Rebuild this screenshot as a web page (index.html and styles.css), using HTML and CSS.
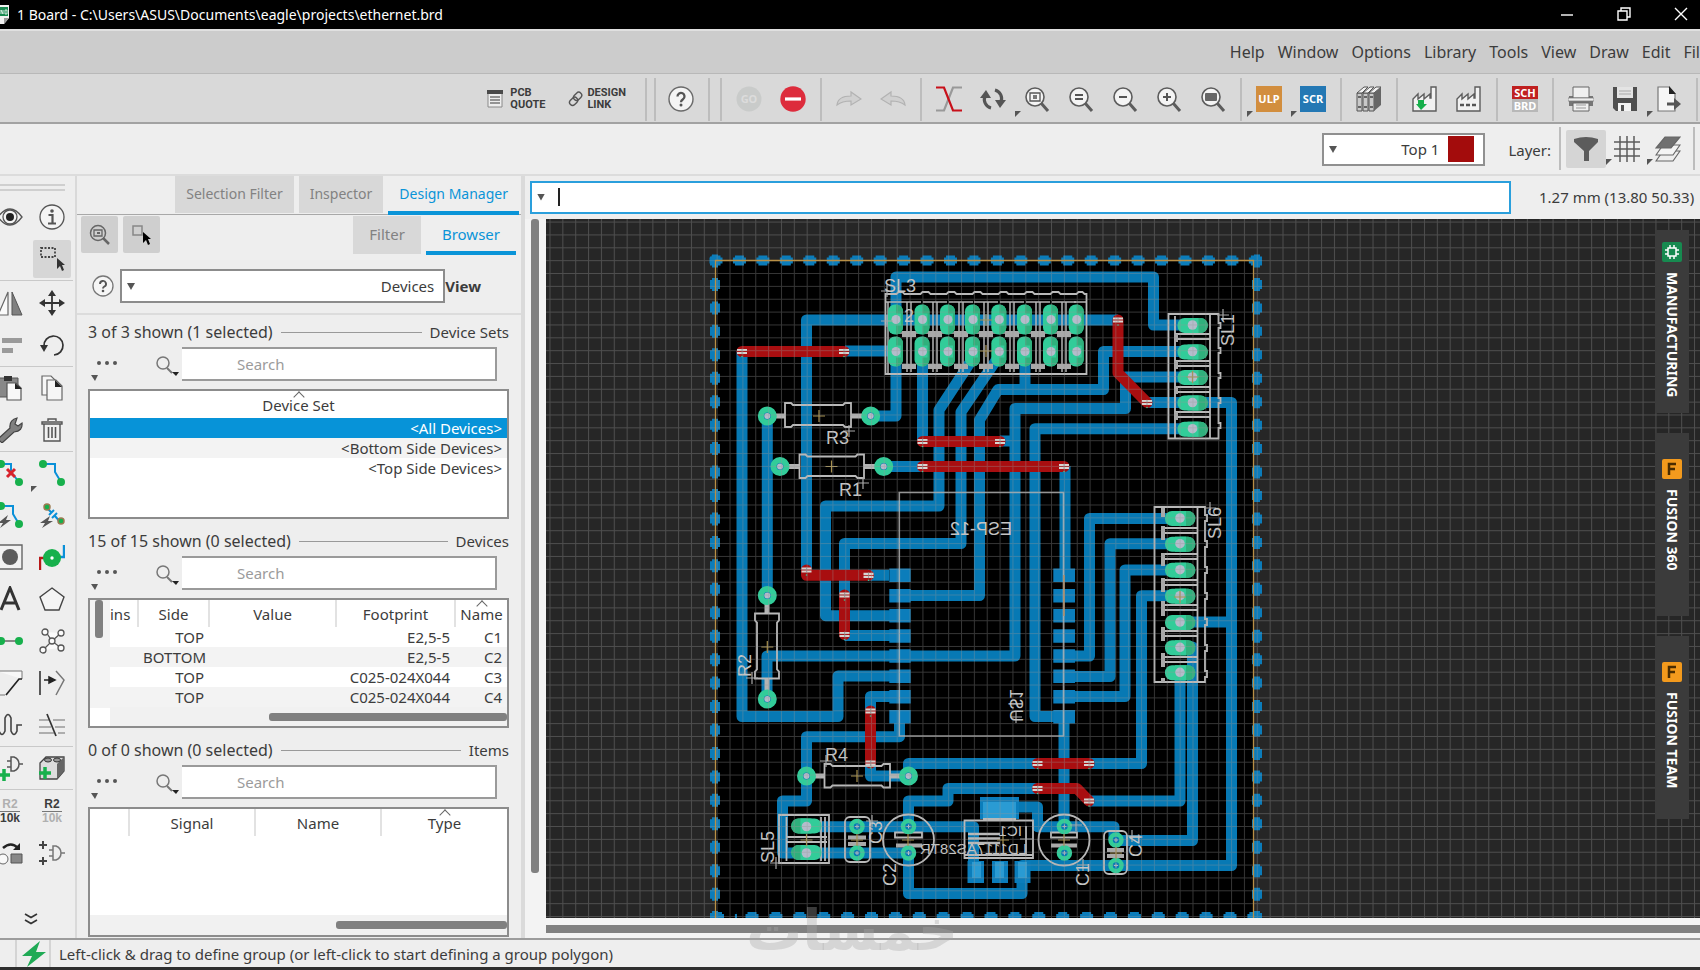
FILE: index.html
```html
<!DOCTYPE html>
<html lang="en">
<head>
<meta charset="utf-8">
<title>1 Board - ethernet.brd</title>
<link rel="stylesheet" href="styles.css">
</head>
<body>
<svg class="defs" width="0" height="0" aria-hidden="true">
  <defs>
    <g id="lens"><path d="M17 17l7 8" stroke="#5c5c5c" stroke-width="3"/><circle cx="11" cy="11" r="9" fill="#f4f4f4" stroke="#5c5c5c" stroke-width="1.6"/></g>
    <g id="factory"><path d="M1 25V13l5-5v5l6-5v5l6-5v4h1V1h5v24z" fill="#f2f2f2" stroke="#5c5c5c" stroke-width="1.4"/></g>
    <g id="more"><circle cx="11" cy="16" r="2"/><circle cx="19" cy="16" r="2"/><circle cx="27" cy="16" r="2"/><path d="M3 28h7l-3 6z"/></g>
    <g id="find"><circle cx="9" cy="15" r="6" fill="none" stroke="#777" stroke-width="1.5"/><path d="M13 20l5 5" stroke="#777" stroke-width="2"/><path d="M18 24h7l-3 4z" fill="#222"/></g>
    <g id="padv"><rect x="-8" y="-15" width="15" height="30" rx="7" fill="#32cc99"/><path d="M0-15a7 7 0 0 1 7 7V8a7 7 0 0 1-7 7z" fill="#2fb07c"/><rect x="-5" y="-6" width="10" height="12" fill="#32cc99"/><circle r="4.5" fill="#b4bccb"/></g>
    <g id="padh"><rect x="-15" y="-7" width="30" height="15" rx="7" fill="#32cc99"/><path d="M0-7h8a7 7 0 0 1 0 15H0z" fill="#2fb07c"/><rect x="-5" y="-7" width="11" height="15" fill="#32cc99"/><circle r="4.8" fill="#b4bccb"/></g>
    <g id="pin"><circle r="6.500" fill="#0779b4" stroke="#32cc99" stroke-width="6"/><circle r="3" fill="#b4bccb"/></g>
    <g id="spin"><circle r="5.500" fill="#0779b4" stroke="#32cc99" stroke-width="4.500"/><path d="M-2 0h4M0-2v4" stroke="#b4bccb"/></g>
    <g id="via"><path d="M-5-1.5H5M-5 1.5H5" stroke="#d9d3d0" stroke-width="2.2"/><path d="M0-3V3" stroke="#888" stroke-width=".7"/><circle cy="5" r=".8" fill="#32cc99"/></g>
    <g id="mark"><path d="M-6 0H6M0-6V6" fill="none" stroke="#a9a9a9" stroke-width="1.2"/></g>
    <g id="origin"><path d="M-6 0H6M0-6V6" fill="none" stroke="#a8914e" stroke-width="1.2"/></g>
    <g id="cell3"><path d="M11 8V78M15 8V78M1 8H25M1 39H8M18 39H25" fill="none" stroke="#b5b5b5" stroke-width="1.500"/><path d="M6 37H20V43H6z" fill="#a9a9a9"/><path d="M6 70H20V75H6z" fill="#a9a9a9"/></g>
  </defs>
</svg>

<div class="app">
  <header class="title">
    <svg class="app-icon" width="9" height="20" viewBox="0 0 9 20"><path d="M0 0H9V13L4 19H0z" fill="#f2f2f2"/><path d="M0 2H8V11H0z" fill="#178a50"/><path d="M1 9V5l2 4V5M5 5h2v4H5z" fill="none" stroke="#fff" stroke-width=".8"/><path d="M9 13L4 19V13z" fill="#999"/></svg>
    <h1>1 Board - C:\Users\ASUS\Documents\eagle\projects\ethernet.brd</h1>
    <div class="win">
      <button aria-label="Minimize"><svg width="14" height="14" viewBox="0 0 14 14"><path d="M1 8H13" stroke="#fff" stroke-width="1.4"/></svg></button>
      <button aria-label="Restore"><svg width="14" height="14" viewBox="0 0 14 14"><path d="M1 4H10V13H1zM4 4V1H13V10H10" fill="none" stroke="#fff" stroke-width="1.4"/></svg></button>
      <button aria-label="Close"><svg width="14" height="14" viewBox="0 0 14 14"><path d="M1 1L13 13M13 1L1 13" stroke="#fff" stroke-width="1.4"/></svg></button>
    </div>
  </header>

  <nav class="menu">
    <button>Help</button><button>Window</button><button>Options</button><button>Library</button><button>Tools</button><button>View</button><button>Draw</button><button>Edit</button><button>File</button>
  </nav>

  <div class="toolbar" role="toolbar" aria-label="Actions">
    <button class="wide">
      <svg width="16" height="18" viewBox="0 0 16 18"><path d="M1 1H15V17H1z" fill="#eee" stroke="#8a8a8a"/><path d="M0 0H16V4H0z" fill="#4a4a4a"/><path d="M3 7H13M3 10H13M3 13H13" stroke="#777" stroke-width="1.4"/></svg>
      <span>PCB<br>QUOTE</span>
    </button>
    <button class="wide">
      <svg width="16" height="16" viewBox="0 0 16 16"><g fill="none" stroke="#555" stroke-width="1.4"><rect x="7" y="1" width="6" height="9" rx="3" transform="rotate(45 10 5)"/><rect x="3" y="6" width="6" height="9" rx="3" transform="rotate(45 6 10)"/></g></svg>
      <span>DESIGN<br>LINK</span>
    </button>
    <i class="sep double"></i>
    <button class="tool" aria-label="Help"><svg width="26" height="26" viewBox="0 0 26 26"><circle cx="13" cy="13" r="12" fill="#f4f4f4" stroke="#6a6a6a" stroke-width="1.4"/><path d="M9.500 10.500a3.500 3.500 0 1 1 5.500 2.800c-1.500 1-2 1.500-2 3" fill="none" stroke="#555" stroke-width="2.300"/><circle cx="13" cy="19" r="1.500" fill="#555"/></svg></button>
    <i class="sep"></i><i class="sep"></i>
    <button class="tool" aria-label="Go"><svg width="26" height="26" viewBox="0 0 26 26"><circle cx="13" cy="13" r="12.500" fill="#c9cbca"/><text x="13" y="17" text-anchor="middle" class="go">GO</text></svg></button>
    <button class="tool" aria-label="Stop"><svg width="26" height="26" viewBox="0 0 26 26"><circle cx="13" cy="13" r="12.700" fill="#dd2c3c"/><path d="M5 13H21" stroke="#fff" stroke-width="3.200"/></svg></button>
    <i class="sep"></i>
    <button class="tool" aria-label="Redo"><svg width="26" height="26" viewBox="0 0 26 26"><path d="M1 19Q2 10 15 10V6L25 13L15 19V15Q6 15 1 19z" fill="#d0d0d0" stroke="#b2b2b2" stroke-width="1.200"/></svg></button>
    <button class="tool" aria-label="Undo"><svg width="26" height="26" viewBox="0 0 26 26"><path d="M25 19Q24 10 11 10V6L1 13L11 19V15Q20 15 25 19z" fill="#d0d0d0" stroke="#b2b2b2" stroke-width="1.200"/></svg></button>
    <i class="sep"></i>
    <button class="tool" aria-label="Ratsnest"><svg width="26" height="26" viewBox="0 0 26 26"><path d="M0 24.500H8L17 1.500H26" fill="none" stroke="#999" stroke-width="2.200"/><path d="M0 1.500H8L17 24.500H26" fill="none" stroke="#c8101a" stroke-width="2.200"/></svg></button>
    <button class="tool" aria-label="Redraw"><svg width="26" height="26" viewBox="0 0 26 26"><path d="M11 22A9 9 0 0 1 5 10M15 4A9 9 0 0 1 21 16" fill="none" stroke="#555" stroke-width="3.200"/><path d="M0 12L6 4L11 12zM15 14H26L20 22z" fill="#555"/></svg></button>
    <button class="tool" aria-label="Zoom window"><i class="drop"></i><svg width="26" height="26" viewBox="0 0 26 26"><use href="#lens"/><path d="M6 7H16V15H6z" fill="none" stroke="#555" stroke-width="1.300"/><path d="M9 9H13V13H9z" fill="#777"/></svg></button>
    <button class="tool" aria-label="Zoom reset"><svg width="26" height="26" viewBox="0 0 26 26"><use href="#lens"/><path d="M7 9H15M7 13H15" stroke="#555" stroke-width="2"/></svg></button>
    <button class="tool" aria-label="Zoom out"><svg width="26" height="26" viewBox="0 0 26 26"><use href="#lens"/><path d="M7 11H15" stroke="#555" stroke-width="2"/></svg></button>
    <button class="tool" aria-label="Zoom in"><svg width="26" height="26" viewBox="0 0 26 26"><use href="#lens"/><path d="M7 11H15M11 7V15" stroke="#555" stroke-width="2"/></svg></button>
    <button class="tool" aria-label="Zoom to fit"><svg width="26" height="26" viewBox="0 0 26 26"><use href="#lens"/><rect x="5" y="7" width="12" height="8" rx="1" fill="#666"/></svg></button>
    <i class="sep"></i>
    <button class="tool" aria-label="Run ULP"><i class="drop"></i><b class="tag ulp">ULP</b></button>
    <button class="tool" aria-label="Run script"><i class="drop"></i><b class="tag scr">SCR</b></button>
    <i class="sep"></i>
    <button class="tool" aria-label="Library"><svg width="26" height="26" viewBox="0 0 26 26"><path d="M1 7L8 1H14L8 7V25H1z" fill="#e4e4e4"/><path d="M1 7H6V25H1zM7 7H12V25H7zM13 7H18V25H13z" fill="#c9c9c9" stroke="#555"/><path d="M1 7L8 1H12L6 7zM7 7L14 1H18L12 7zM13 7L20 1H25L18 7z" fill="#f2f2f2" stroke="#555"/><path d="M18 7L25 1V19L18 25z" fill="#666"/><path d="M2 11H5M8 11H11M14 11H17M2 21H5M8 21H11M14 21H17" stroke="#666" stroke-width="2"/></svg></button>
    <i class="sep"></i>
    <button class="tool" aria-label="Import CAM"><svg width="26" height="26" viewBox="0 0 26 26"><use href="#factory"/><path d="M6 14H12V18H15L9 24L4 18H6z" fill="#17b04c"/></svg></button>
    <button class="tool" aria-label="CAM processor"><svg width="26" height="26" viewBox="0 0 26 26"><use href="#factory"/><path d="M4 19H8M10 19H14M16 19H20" stroke="#555" stroke-width="2.600"/></svg></button>
    <i class="sep"></i>
    <button class="tool" aria-label="Switch to schematic"><span class="schbrd"><b>SCH</b><b>BRD</b></span></button>
    <i class="sep"></i>
    <button class="tool" aria-label="Print"><svg width="26" height="26" viewBox="0 0 26 26"><path d="M1 10H25V20H1z" fill="#777"/><path d="M5 1H21V12H5zM5 17H21V25H5z" fill="#f0f0f0" stroke="#666"/><path d="M0 12H26V15H0z" fill="#eee" stroke="#777" stroke-width=".700"/><path d="M8 19H18M8 22H18" stroke="#999"/></svg></button>
    <button class="tool" aria-label="Save"><svg width="26" height="26" viewBox="0 0 26 26"><path d="M1 1H25V25H4L1 22z" fill="#4f4f4f"/><path d="M5 1H21V12H5z" fill="#e4e4e4"/><path d="M7 5H19M7 8H19" stroke="#aaa"/><path d="M6 17H19V25H6z" fill="#f4f4f4"/><path d="M9 19H12V25H9z" fill="#555"/></svg></button>
    <button class="tool" aria-label="Export"><i class="drop"></i><svg width="26" height="26" viewBox="0 0 26 26"><path d="M2 1H13L19 8V25H2z" fill="#f6f6f6" stroke="#777" stroke-width="1.200"/><path d="M13 0V8H20z" fill="#222"/><path d="M11 18H20" stroke="#555" stroke-width="3"/><path d="M18 12L25 18L18 24z" fill="#555"/></svg></button>
    <i class="sep"></i>
  </div>

  <div class="layerbar">
    <div class="combo layer-combo">
      <select id="layer" aria-label="Layer"><option>Top 1</option></select><i class="swatch"></i>
    </div>
    <label for="layer">Layer:</label>
    <i class="sep"></i>
    <button class="tool on" aria-label="Filter"><svg width="26" height="26" viewBox="0 0 26 26"><path d="M1 3Q13-1 25 3V6L16 15V25H11V15L1 6z" fill="#5c5c5c"/></svg></button>
    <button class="tool" aria-label="Grid"><i class="drop"></i><svg width="26" height="26" viewBox="0 0 26 26"><path d="M6 0V26M13 0V26M20 0V26M0 6H26M0 13H26M0 20H26" stroke="#5c5c5c" stroke-width="1.500"/></svg></button>
    <button class="tool" aria-label="Layer settings"><i class="drop"></i><svg width="26" height="26" viewBox="0 0 26 26"><g stroke="#666" stroke-width="1.200"><path d="M8 15H25L18 25H1z" fill="#eee"/><path d="M8 9H25L18 19H1z" fill="#f4f4f4"/><path d="M10 1H25L16 12H1z" fill="#707070"/></g></svg></button>
    <i class="sep"></i>
  </div>

  <main class="work">
    <aside class="tools" aria-label="Drawing tools">
      <div class="grip"></div>
      <div class="pair">
        <button aria-label="Show"><svg width="26" height="26" viewBox="0 0 26 26"><path d="M1 13Q13-3 25 13Q13 29 1 13z" fill="#f4f4f4" stroke="#555" stroke-width="1.300"/><circle cx="13" cy="13" r="7" fill="none" stroke="#555" stroke-width="1.300"/><circle cx="13" cy="13" r="4" fill="#222"/></svg></button>
        <button aria-label="Info"><svg width="26" height="26" viewBox="0 0 26 26"><circle cx="13" cy="13" r="12" fill="#f4f4f4" stroke="#555" stroke-width="1.300"/><circle cx="13" cy="7" r="1.800" fill="#555"/><path d="M9.500 11H13.500V19M9 19.500H17" fill="none" stroke="#555" stroke-width="2.200"/></svg></button>
      </div>
      <div class="pair">
        <span></span>
        <button class="on" aria-label="Group"><svg width="26" height="26" viewBox="0 0 26 26"><path d="M2 2H16V11H2z" fill="none" stroke="#444" stroke-width="1.800" stroke-dasharray="2 1.500"/><path d="M18 12V23L21 20L23 25L25 24L23 19H26z" fill="#333"/></svg></button>
      </div>
      <hr>
      <div class="pair">
        <button aria-label="Mirror"><svg width="26" height="26" viewBox="0 0 26 26"><path d="M11 2V25H1z" fill="#fafafa" stroke="#666" stroke-width="1.200"/><path d="M15 2V25H25z" fill="#808080" stroke="#555"/></svg></button>
        <button aria-label="Move"><svg width="26" height="26" viewBox="0 0 26 26"><path d="M13 4V22M4 13H22" stroke="#333" stroke-width="1.800"/><path d="M13 0L17 6H9zM13 26L17 20H9zM0 13L6 9V17zM26 13L20 9V17z" fill="#333"/></svg></button>
      </div>
      <div class="pair">
        <button aria-label="Align"><svg width="26" height="26" viewBox="0 0 26 26"><path d="M5 6H25V11H5zM5 16H16V21H5z" fill="#9a9a9a"/></svg></button>
        <button aria-label="Rotate"><svg width="26" height="26" viewBox="0 0 26 26"><path d="M5 14A9.500 9.500 0 1 1 15 23" fill="none" stroke="#333" stroke-width="1.700"/><path d="M1 13H9L5 20z" fill="#333"/></svg></button>
      </div>
      <hr>
      <div class="pair">
        <button aria-label="Paste"><svg width="26" height="26" viewBox="0 0 26 26"><path d="M1 3H21V22H1z" fill="#888" stroke="#555"/><path d="M7 1H15V6H7z" fill="#333"/><path d="M10 8H19L24 13V25H10z" fill="#f8f8f8" stroke="#555" stroke-width="1.200"/><path d="M18 8V14H25z" fill="#222"/></svg></button>
        <button aria-label="Copy"><svg width="26" height="26" viewBox="0 0 26 26"><g fill="#f6f6f6" stroke="#666" stroke-width="1.200"><path d="M3 1H12L16 5V20H3z"/><path d="M8 5H17L23 11V25H8z"/></g><path d="M16 5V12H23z" fill="#222"/></svg></button>
      </div>
      <div class="pair">
        <button aria-label="Change"><svg width="26" height="26" viewBox="0 0 26 26"><path d="M1 22L13 11Q12 3 20 1L18 7L21 9L25 6Q26 14 17 15L5 26z" fill="#808080" stroke="#444" stroke-width="1.200"/></svg></button>
        <button aria-label="Delete"><svg width="26" height="26" viewBox="0 0 26 26"><path d="M5 7H21V24H5zM9 4V2H17V4M3 5H23V7H3z" fill="#f2f2f2" stroke="#555" stroke-width="1.400"/><path d="M9.500 10V21M13 10V21M16.500 10V21" stroke="#555" stroke-width="1.600"/></svg></button>
      </div>
      <hr>
      <div class="pair">
        <button aria-label="Ripup"><svg width="26" height="26" viewBox="0 0 26 26"><path d="M4 4H14V12L22 22" fill="none" stroke="#0a90d8" stroke-width="2"/><circle cx="4" cy="4" r="4" fill="#17b04c"/><circle cx="22" cy="22" r="4" fill="#17b04c"/><path d="M10 9L18 17M18 9L10 17" stroke="#d9222c" stroke-width="3"/></svg></button>
        <button aria-label="Route"><i class="drop"></i><svg width="26" height="26" viewBox="0 0 26 26"><path d="M4 4H16V12L22 22" fill="none" stroke="#0a90d8" stroke-width="2"/><circle cx="4" cy="4" r="4" fill="#17b04c"/><circle cx="22" cy="22" r="4" fill="#17b04c"/></svg></button>
      </div>
      <div class="pair">
        <button aria-label="Autoroute"><svg width="26" height="26" viewBox="0 0 26 26"><path d="M4 4H16V12L22 22" fill="none" stroke="#0a90d8" stroke-width="2"/><circle cx="4" cy="4" r="4" fill="#17b04c"/><circle cx="22" cy="22" r="4" fill="#17b04c"/><path d="M11 13L1 21H6L3 26L14 18H9z" fill="#555"/></svg></button>
        <button aria-label="Reroute"><svg width="26" height="26" viewBox="0 0 26 26"><path d="M8 6L12 10M16 14L22 21M10 13L15 8M13 16L18 11" stroke="#0a90d8" stroke-width="2"/><circle cx="8" cy="5" r="3" fill="#17b04c" stroke="#997a50" stroke-width="1.500"/><circle cx="22" cy="19" r="3" fill="#17b04c" stroke="#997a50" stroke-width="1.500"/><path d="M11 14L1 21H6L3 26L14 19H9z" fill="#555"/></svg></button>
      </div>
      <div class="pair">
        <button aria-label="Hole"><svg width="26" height="26" viewBox="0 0 26 26"><path d="M1 1H25V25H1z" fill="#f2f2f2" stroke="#666" stroke-width="1.400"/><circle cx="13" cy="13" r="8" fill="#5c5c5c"/></svg></button>
        <button aria-label="Via"><svg width="26" height="26" viewBox="0 0 26 26"><path d="M1 26V14H8" fill="none" stroke="#b81818" stroke-width="2.400"/><path d="M25 1V13H18" fill="none" stroke="#0a90d8" stroke-width="2.400"/><circle cx="13" cy="14" r="9" fill="#17b04c"/><circle cx="13" cy="14" r="1.700" fill="#fff"/></svg></button>
      </div>
      <div class="pair">
        <button aria-label="Text"><svg width="26" height="26" viewBox="0 0 26 26"><path d="M4 24L13 2L22 24M7 17H19" fill="none" stroke="#333" stroke-width="3"/></svg></button>
        <button aria-label="Polygon"><svg width="26" height="26" viewBox="0 0 26 26"><path d="M13 2L25 11L20 24H6L1 11z" fill="#f4f4f4" stroke="#444" stroke-width="1.400"/></svg></button>
      </div>
      <div class="pair">
        <button aria-label="Airwire"><svg width="26" height="26" viewBox="0 0 26 26"><path d="M4 13H22" stroke="#888" stroke-width="2"/><circle cx="4" cy="13" r="4" fill="#17b04c"/><circle cx="22" cy="13" r="4" fill="#17b04c"/></svg></button>
        <button aria-label="Ratsnest nodes"><svg width="26" height="26" viewBox="0 0 26 26"><g fill="#fafafa" stroke="#555" stroke-width="1.300"><path d="M7 4L13 13L22 5M4 22L13 13L22 20"/><circle cx="6" cy="4" r="3"/><circle cx="22" cy="5" r="3"/><circle cx="13" cy="13" r="3"/><circle cx="4" cy="22" r="3"/><circle cx="22" cy="20" r="3"/></g></svg></button>
      </div>
      <div class="pair">
        <button aria-label="Miter"><svg width="26" height="26" viewBox="0 0 26 26"><path d="M0 1H25V9M8 25H0" fill="#f8f8f8" stroke="#777"/><path d="M25 9H22L9 25" fill="none" stroke="#222" stroke-width="1.700"/></svg></button>
        <button aria-label="Split"><svg width="26" height="26" viewBox="0 0 26 26"><path d="M1 1V25" stroke="#333" stroke-width="1.600"/><path d="M17 1L25 10L17 25" fill="none" stroke="#777" stroke-width="1.500"/><path d="M5 10H11M10 7L16 10L10 13z" stroke="#222" fill="#222" stroke-width="1.500"/></svg></button>
      </div>
      <div class="pair">
        <button aria-label="Meander"><svg width="26" height="26" viewBox="0 0 26 26"><path d="M0 13H2V19Q5 26 8 19V6Q11-1 14 6V19Q17 26 20 19V13H25" fill="none" stroke="#444" stroke-width="1.600"/></svg></button>
        <button aria-label="Slice"><svg width="26" height="26" viewBox="0 0 26 26"><path d="M0 8H10M14 8H26M0 15H12M16 15H26M0 21H15M19 21H26" stroke="#999" stroke-width="1.700"/><path d="M8 2L17 24" stroke="#333" stroke-width="1.700"/></svg></button>
      </div>
      <hr>
      <div class="pair">
        <button aria-label="Add gate"><svg width="26" height="26" viewBox="0 0 26 26"><path d="M14 2H17Q22 4 22 9Q22 14 17 16H14zM10 6H14M10 12H14M22 9H26" fill="none" stroke="#555" stroke-width="1.500"/><path d="M7 14V26M1 20H13" stroke="#17b04c" stroke-width="3.500"/></svg></button>
        <button aria-label="Add part"><svg width="26" height="26" viewBox="0 0 26 26"><path d="M1 8L7 2H25V16L18 24H1z" fill="#ddd" stroke="#444" stroke-width="1.300"/><path d="M18 9L25 2V16L18 24z" fill="#666"/><ellipse cx="9" cy="5" rx="3.500" ry="2" fill="#999" stroke="#333"/><ellipse cx="18" cy="5" rx="3.500" ry="2" fill="#999" stroke="#333"/><path d="M6 12V24M0 18H12" stroke="#17b04c" stroke-width="3.500"/></svg></button>
      </div>
      <hr>
      <div class="pair">
        <button class="frac" aria-label="Value"><span class="dim">R2</span><span>10k</span></button>
        <button class="frac" aria-label="Name"><span>R2</span><span class="dim">10k</span></button>
      </div>
      <div class="pair">
        <button aria-label="Replace"><svg width="26" height="26" viewBox="0 0 26 26"><circle cx="6" cy="19" r="5" fill="#f8f8f8" stroke="#666"/><path d="M14 14H25V23H14z" fill="#888" stroke="#555"/><path d="M6 8Q14 1 21 8" fill="none" stroke="#222" stroke-width="2.500"/><path d="M16 10H23V3z" fill="#222"/></svg></button>
        <button aria-label="Gate swap"><svg width="26" height="26" viewBox="0 0 26 26"><path d="M14 6H17Q22 8 22 13Q22 18 17 20H14zM10 10H14M10 16H14M22 13H26" fill="none" stroke="#777" stroke-width="1.500"/><path d="M4 1V9M0 5H8M4 17V25M0 21H8" stroke="#444" stroke-width="2"/></svg></button>
      </div>
      <button class="expand" aria-label="More tools"><svg width="14" height="14" viewBox="0 0 14 14"><path d="M1 2L7 5.500L13 2M1 8L7 11.500L13 8" fill="none" stroke="#333" stroke-width="1.700"/></svg></button>
    </aside>

    <section class="panel">
      <div class="tabs">
        <button>Selection Filter</button><button>Inspector</button><button class="active">Design Manager</button>
      </div>
      <div class="subtabs">
        <button class="square" aria-label="Zoom to selection"><svg width="22" height="22" viewBox="0 0 22 22"><path d="M14 14L20 20" stroke="#666" stroke-width="2.500"/><circle cx="9" cy="9" r="7.500" fill="none" stroke="#666" stroke-width="1.500"/><path d="M5 6H13V12H5z" fill="none" stroke="#666" stroke-width="1.300"/><path d="M8 8H11V10H8z" fill="#666"/></svg></button>
        <button class="square" aria-label="Select items"><svg width="22" height="22" viewBox="0 0 22 22"><path d="M2 2H11V11H2z" fill="none" stroke="#888" stroke-width="1.500"/><path d="M12 8V19L15 16L17 21L19 20L17 15H20z" fill="#000"/></svg></button>
        <span class="grow"></span>
        <button class="sub">Filter</button><button class="sub active">Browser</button>
      </div>
      <div class="view">
        <button class="hint" aria-label="Help"><svg width="22" height="22" viewBox="0 0 22 22"><circle cx="11" cy="11" r="10" fill="#f6f6f6" stroke="#777" stroke-width="1.300"/><path d="M8 9a3 3 0 1 1 4.500 2.500c-1 .700-1.500 1-1.500 2" fill="none" stroke="#555" stroke-width="1.900"/><circle cx="11" cy="16" r="1.300" fill="#555"/></svg></button>
        <div class="combo"><select id="view"><option>Devices</option></select></div>
        <label for="view">View</label>
      </div>

      <div class="sections">
        <section class="block">
          <div class="caption"><span>3 of 3 shown (1 selected)</span><i></i><span>Device Sets</span></div>
          <div class="search">
            <button aria-label="Options"><svg width="60" height="35" viewBox="0 0 60 35" fill="#555"><use href="#more"/></svg></button>
            <button aria-label="Search options"><svg width="26" height="33" viewBox="0 0 26 33"><use href="#find"/></svg></button>
            <input type="text" placeholder="Search" aria-label="Search device sets">
          </div>
          <div class="box">
            <table>
              <thead><tr><th class="sorted">Device Set</th></tr></thead>
              <tbody><tr class="sel"><td>&lt;All Devices&gt;</td></tr><tr><td>&lt;Bottom Side Devices&gt;</td></tr><tr><td>&lt;Top Side Devices&gt;</td></tr></tbody>
            </table>
          </div>
        </section>

        <section class="block">
          <div class="caption"><span>15 of 15 shown (0 selected)</span><i></i><span>Devices</span></div>
          <div class="search">
            <button aria-label="Options"><svg width="60" height="35" viewBox="0 0 60 35" fill="#555"><use href="#more"/></svg></button>
            <button aria-label="Search options"><svg width="26" height="33" viewBox="0 0 26 33"><use href="#find"/></svg></button>
            <input type="text" placeholder="Search" aria-label="Search devices">
          </div>
          <div class="box">
            <div class="split">
              <div class="vtrack"><i></i></div>
              <div class="scrolled">
                <table class="grid">
                  <colgroup><col class="c-pins"><col class="c-side"><col><col class="c-foot"><col class="c-name"></colgroup>
                  <thead><tr><th class="cut">ins</th><th>Side</th><th>Value</th><th>Footprint</th><th class="sorted">Name</th></tr></thead>
                  <tbody>
                    <tr><td></td><td>TOP</td><td></td><td>E2,5-5</td><td>C1</td></tr>
                    <tr><td></td><td>BOTTOM</td><td></td><td>E2,5-5</td><td>C2</td></tr>
                    <tr><td></td><td>TOP</td><td></td><td>C025-024X044</td><td>C3</td></tr>
                    <tr><td></td><td>TOP</td><td></td><td>C025-024X044</td><td>C4</td></tr>
                  </tbody>
                </table>
                <div class="htrack"><i class="w60"></i></div>
              </div>
            </div>
          </div>
        </section>

        <section class="block">
          <div class="caption"><span>0 of 0 shown (0 selected)</span><i></i><span>Items</span></div>
          <div class="search">
            <button aria-label="Options"><svg width="60" height="35" viewBox="0 0 60 35" fill="#555"><use href="#more"/></svg></button>
            <button aria-label="Search options"><svg width="26" height="33" viewBox="0 0 26 33"><use href="#find"/></svg></button>
            <input type="text" placeholder="Search" aria-label="Search items">
          </div>
          <div class="box">
            <table class="grid">
              <colgroup><col class="c-first"><col><col><col></colgroup>
              <thead><tr><th></th><th>Signal</th><th>Name</th><th class="sorted">Type</th></tr></thead>
            </table>
            <div class="htrack"><i class="w41"></i></div>
          </div>
        </section>
      </div>
    </section>

    <section class="editor">
      <div class="command">
        <div class="cmd"><button class="arrow" aria-label="Command history"></button><i class="caret"></i><input type="text" aria-label="Command"></div>
        <output>1.27 mm (13.80 50.33)</output>
      </div>
      <div class="stage">
        <div class="vscroll"><i></i></div>
        <div class="canvas">
<svg class="board" viewBox="546 219 1154 699" preserveAspectRatio="xMinYMin slice" role="img" aria-label="Ethernet board layout">
  <defs><pattern id="grid" x="703.800" y="247.300" width="12.860" height="12.860" patternUnits="userSpaceOnUse"><path d="M0 .5H12.860M.5 0V12.860" stroke="#969696" stroke-opacity=".36"/></pattern></defs>
  <rect x="546" y="219" width="1154" height="699" fill="#262626"/>
  <rect x="715" y="260" width="538" height="660" fill="#000"/>
  <g fill="none" stroke="#0779b4" stroke-width="11" stroke-linejoin="round">
    <g stroke="#0b7cba" stroke-width="10" stroke-dasharray="9 14.450" stroke-dashoffset="-2"><path d="M709.500 260.500H1262M715 254.500V918M1257 254.500V918"/><path d="M711 917H737M745.500 917H1262" stroke-dasharray="9 14.900"/></g>
    <g stroke="#0b7cba" stroke-width="6" stroke-dasharray="13 10.450"><path d="M709.500 260.500H1262M715 254.500V918M1257 254.500V918"/><path d="M711 917H737M745.500 917H1262" stroke-dasharray="13 10.900"/></g>
    <path d="M896 320V277H1153.500V325H1193"/>
    <path d="M806.500 570V320H1118"/>
    <path d="M845 351H896V416H871"/>
    <path d="M742 351V716.500H838V676H900"/>
    <path d="M922.500 351V441M1000 441H1015"/>
    <path d="M767.300 416V595"/>
    <path d="M884 466.500H922M1065 466V575M1064 717V826"/>
    <path d="M973 351V358L939 410V506H825.500V615.700H900"/>
    <path d="M999 351V356L961 412V543.500H844.500V595M844.500 635.500H900"/>
    <path d="M1193 351.500H1103.500V389.500H998L979.500 420V595.500H900M1025 351V389"/>
    <path d="M1193 377H1125.500V408.500H1015V656H767V699"/>
    <path d="M1147 402.500H1231.500V865.500H1022V893.500H908.500V853"/>
    <path d="M1193 428.700H1035V716.500H1064"/>
    <path d="M1180 518.500H1089.500V656H1064M1180 543.700H1110V676.500H1064M1180 570H1125V696.500H1064"/>
    <path d="M1180 595.700H1141.500V763.500H1089M1037 763.500H908.500V776"/>
    <path d="M1180 622H1231M1180 647H1192.500V840.500H1116"/>
    <path d="M1180 672V801H1089M1037 788.500H948V801H908.500V826"/>
    <path d="M868 575.300H889M900 696.500H870.500V711M870.500 763V776H908"/>
    <path d="M899.500 717V736.700H806.500V801H782.500V853H908.500M806 826.700H973.500V870"/>
    <path d="M1019 807H1037.500V826.700H1114V840"/>
  </g>
  <g fill="#0b7dbb">
    <path d="M889.300 568.500h21.400v13.500h-21.400zM889.300 589h21.400v13.500h-21.400zM889.300 609h21.400v13.500h-21.400zM889.300 629.200h21.400v13.500h-21.400zM889.300 649.300h21.400v13.500h-21.400zM889.300 669.500h21.400v13.500h-21.400zM889.300 690h21.400v13.500h-21.400zM889.300 710h21.400v13.500h-21.400z"/>
    <path d="M1053.300 568.500h21.700v13.500h-21.700zM1053.300 589h21.700v13.500h-21.700zM1053.300 609h21.700v13.500h-21.700zM1053.300 629.200h21.700v13.500h-21.700zM1053.300 649.300h21.700v13.500h-21.700zM1053.300 669.500h21.700v13.500h-21.700zM1053.300 690h21.700v13.500h-21.700zM1053.300 710h21.700v13.500h-21.700z"/>
    <path d="M980 797h39v22h-39zM967.500 861h16.500v22h-16.500zM992 861h16v22h-16zM1014.500 861h16v22h-16z"/>
  </g>
  <path d="M983 802h33v16h-33zM972 862h9v16h-9zM995 862h9v16h-9zM1018 862h9v16h-9z" fill="#2a9bd3"/>
  <g fill="none" stroke="#a80e10" stroke-width="11" stroke-linejoin="round" stroke-linecap="round">
    <path d="M742 351.500H844M922.500 441.500H1000M922.500 466.500H1064M1118 320V373L1147 402.500M806.500 570V575.300H868.500M844.500 595V634.500M870.500 711V763M1037.500 763.500H1089M1037.500 788.500H1077L1089 801"/>
  </g>
  <g stroke="#b9b9b9" fill="none" stroke-width="1.600">
    <path d="M899.300 492.500H1063.500V736H899.300z" stroke-opacity=".8"/>
    <g stroke="#b3b3b3" stroke-width="5"><path d="M767 416H785M851 416H871M780 466.500H799M864 466.500H884M767 595V613M767 679V699M806 776H824M890 776H908"/></g>
    <g stroke-width="1.800">
      <path d="M787 403h4l2 2h50l2-2h6v24h-6l-2-2h-50l-2 2h-6v-24zM799.500 454.500h6l2 2h48l2-2h6.500v23.500h-6.500l-2-2h-48l-2 2h-6zM755 613.500h24v7l-2 2v47l2 2v7h-24v-7l2-2v-47l-2-2zM824.500 764h6l2 2h49l2-2h6.500v23.500h-6.500l-2-2h-49l-2 2h-6z"/>
      <path d="M885.500 294h11l2-2h4l2 2h16l2-2h6l2 2h16l2-2h6l2 2h16l2-2h6l2 2h16l2-2h6l2 2h16l2-2h6l2 2h16l2-2h6l2 2h16l2-2h4l2 2h2V374H885.500z"/>
      <path d="M1168.500 314h50v9l2 0v5l-2 0v20l2 0v5l-2 0v20l2 0v5l-2 0v20l2 0v5l-2 0v20l2 0v5l-2 0V438.500h-50zM1210 314V438M1175 316V438M1175 334H1210M1175 339H1210M1175 361H1210M1175 366H1210M1175 387H1210M1175 392H1210M1175 412H1210M1175 417H1210"/>
      <path d="M1154.500 507H1205V515h2v6h-2V541h2v6h-2V567h2v6h-2V593h2v6h-2V619h2v6h-2V645h2v6h-2V671h2v6h-2V682H1154.500zM1197.500 507V682M1162 528H1197M1162 533H1197M1162 554H1197M1162 559H1197M1162 580H1197M1162 585H1197M1162 605H1197M1162 610H1197M1162 631H1197M1162 636H1197M1162 657H1197M1162 662H1197"/>
      <path d="M779 815h50v48h-50zM786.500 817V861M821 817V861M825 817V861M786 837H827M786 842H827"/>
      <rect x="845" y="817" width="25" height="45" rx="5"/><rect x="1104" y="831" width="23" height="43" rx="5"/>
      <circle cx="908.500" cy="840" r="25.500"/><circle cx="1064" cy="840" r="25.500"/>
      <path d="M964.500 820.500h68.500V858h-68.500zM964.500 855H1033M1026 826V854M983 819H1016"/>
      <path d="M895 832.500h27v5h-27zM1051 832.500h26v5h-26z"/>
    </g>
    <path d="M1163 508V517M1163 526V540M1163 553V566M1163 578V592M1163 601V616M1163 627V641M1163 653V667M1163 678V682M1176 334V342M1176 361V369M1176 386V394M1176 412V420" stroke="#a9a9a9" stroke-width="4"/>
    <path d="M896 845.500H922M1051 845.500H1077M848 837.500H866M848 844H866M1107 850H1124M1107 856H1124" stroke="#a9a9a9" stroke-width="4"/>
    <path d="M968 834H1000M968 838.500H1000M968 843H1000" stroke-width="2.500"/>
  </g>
  <path d="M888 302V373M885 302H897M1086 302H1074" fill="none" stroke="#b5b5b5" stroke-width="1.500"/>
  <use href="#cell3" x="896" y="294"/><use href="#cell3" x="922" y="294"/><use href="#cell3" x="948" y="294"/><use href="#cell3" x="973" y="294"/><use href="#cell3" x="999" y="294"/><use href="#cell3" x="1025" y="294"/><use href="#cell3" x="1051" y="294"/>
  <use href="#padv" x="896" y="319.500"/><use href="#padv" x="922.500" y="319.500"/><use href="#padv" x="948" y="319.500"/><use href="#padv" x="973" y="319.500"/><use href="#padv" x="999.300" y="319.500"/><use href="#padv" x="1025" y="319.500"/><use href="#padv" x="1051" y="319.500"/><use href="#padv" x="1076.700" y="319.500"/>
  <use href="#padv" x="896" y="351.500"/><use href="#padv" x="922.500" y="351.500"/><use href="#padv" x="948" y="351.500"/><use href="#padv" x="973" y="351.500"/><use href="#padv" x="999.300" y="351.500"/><use href="#padv" x="1025" y="351.500"/><use href="#padv" x="1051" y="351.500"/><use href="#padv" x="1076.700" y="351.500"/>
  <use href="#padh" x="1192.500" y="325"/><use href="#padh" x="1192.500" y="351.500"/><use href="#padh" x="1192.500" y="377"/><use href="#padh" x="1192.500" y="402.500"/><use href="#padh" x="1192.500" y="428.700"/>
  <use href="#padh" x="1180" y="518"/><use href="#padh" x="1180" y="543.700"/><use href="#padh" x="1180" y="569.700"/><use href="#padh" x="1180" y="595.700"/><use href="#padh" x="1180" y="622"/><use href="#padh" x="1180" y="647.300"/><use href="#padh" x="1180" y="672.300"/>
  <use href="#padh" transform="translate(806.500 826.500) rotate(180)"/><use href="#padh" transform="translate(806.500 853) rotate(180)"/>
  <use href="#pin" x="767.300" y="416"/><use href="#pin" x="870.700" y="416"/><use href="#pin" x="780" y="466.500"/><use href="#pin" x="883.700" y="466.500"/><use href="#pin" x="767.300" y="595.500"/><use href="#pin" x="767.300" y="699"/><use href="#pin" x="806.500" y="776"/><use href="#pin" x="908.500" y="776"/>
  <use href="#spin" x="857" y="826.500"/><use href="#spin" x="857" y="853"/><use href="#spin" x="1116" y="840"/><use href="#spin" x="1116" y="865.500"/>
  <use href="#spin" x="908.500" y="826.500"/><use href="#spin" x="908.500" y="853"/><use href="#spin" x="1064.400" y="826.500"/><use href="#spin" x="1064.400" y="853"/>
  <use href="#via" x="742" y="351.500"/><use href="#via" x="844" y="351.500"/><use href="#via" x="922.500" y="441.500"/><use href="#via" x="1000" y="441.500"/><use href="#via" x="922.500" y="466.500"/><use href="#via" x="1064" y="466.500"/><use href="#via" x="1118" y="320"/><use href="#via" x="1147" y="402.500"/><use href="#via" x="806.500" y="570"/><use href="#via" x="868.500" y="575.300"/><use href="#via" x="844.500" y="595"/><use href="#via" x="844.500" y="634.500"/><use href="#via" x="870.500" y="711"/><use href="#via" x="870.500" y="763"/><use href="#via" x="1037.500" y="763.500"/><use href="#via" x="1089" y="763.500"/><use href="#via" x="1037.500" y="788.500"/><use href="#via" x="1089" y="801"/>
  <g><use href="#mark" x="887" y="291"/><use href="#mark" x="887" y="321"/><use href="#mark" x="849" y="431"/><use href="#mark" x="863" y="483"/><use href="#mark" x="752" y="678"/><use href="#mark" x="826" y="761"/><use href="#mark" x="1223" y="315"/><use href="#mark" x="1210" y="508"/><use href="#mark" x="776" y="863"/><use href="#mark" x="1016" y="717"/><use href="#mark" x="872" y="821"/><use href="#mark" x="1083" y="865"/><use href="#mark" x="1132" y="836"/><use href="#mark" x="1076" y="825"/><use href="#mark" x="1026" y="839"/></g>
  <use href="#origin" x="819" y="416"/><use href="#origin" x="831.500" y="466.500"/><use href="#origin" x="767.300" y="647"/><use href="#origin" x="857" y="776"/><use href="#origin" x="986" y="320"/><use href="#origin" x="986" y="351"/><use href="#origin" x="1192.500" y="377"/><use href="#origin" x="1180" y="597"/><use href="#origin" x="857" y="840"/><use href="#origin" x="908" y="840"/><use href="#origin" x="1064" y="840"/><use href="#origin" x="1116" y="853"/><use href="#origin" x="806.500" y="840"/><use href="#origin" x="1003" y="840"/>
  <path d="M1064 575V616" stroke="#b08a5e" stroke-width="1.500"/>
  <g class="silk">
    <text x="884" y="292">SL3</text><text x="904" y="322">2</text><text x="826" y="444">R3</text><text x="839" y="496">R1</text><text x="825" y="761">R4</text>
    <text transform="translate(751 677) rotate(-90)">R2</text>
    <text transform="translate(1234 346) rotate(-90)">SL1</text>
    <text transform="translate(1221 539) rotate(-90)">SL6</text>
    <text transform="translate(774 863) rotate(-90)">SL5</text>
    <text transform="translate(882 844) rotate(-90)">C3</text>
    <text transform="translate(1142 857) rotate(-90)">C4</text>
    <text transform="translate(896 886) rotate(-90)">C2</text>
    <text transform="translate(1089 886) rotate(-90)">C1</text>
    <text transform="translate(1012 535) scale(-1 1)">ESP-12</text>
    <text class="small" transform="translate(1022 836) scale(-1 1)">IC1</text>
    <text class="small" transform="translate(1027 854) scale(-1 1)">LD1117AS28TR</text>
    <text transform="translate(1010 722) rotate(-90) scale(1 -1)">U$1</text>
  </g>
  <rect x="546" y="219" width="1154" height="699" fill="url(#grid)"/>
  <path d="M715.500 920V260.500H1253.500V920" fill="none" stroke="#b98f45" stroke-width="1.300"/>
</svg>
          <div class="side-tabs">
            <button><svg width="20" height="20" viewBox="0 0 20 20"><rect width="20" height="20" rx="2" fill="#178a50"/><path d="M6 6H14V14H6zM8 3V6M12 3V6M8 14V17M12 14V17M3 8H6M3 12H6M14 8H17M14 12H17" fill="none" stroke="#fff" stroke-width="1.500"/></svg>MANUFACTURING</button>
            <button class="mid"><svg width="20" height="20" viewBox="0 0 20 20"><rect width="20" height="20" rx="2" fill="#f39a1d"/><path d="M7 16V5H14M7 10H13" fill="none" stroke="#4a2c00" stroke-width="2.500"/></svg>FUSION 360</button>
            <button><svg width="20" height="20" viewBox="0 0 20 20"><rect width="20" height="20" rx="2" fill="#f39a1d"/><path d="M7 16V5H14M7 10H13" fill="none" stroke="#4a2c00" stroke-width="2.500"/></svg>FUSION TEAM</button>
          </div>
          <span class="watermark" lang="ar" dir="rtl">خمسات</span>
        </div>
        <div class="hscroll"><i></i></div>
      </div>
    </section>
  </main>

  <footer class="status">
    <i></i>
    <svg width="26" height="26" viewBox="0 0 26 26"><path d="M19 0L1 15H11L6 26L25 11H15z" fill="#1faa55"/></svg>
    <i></i>
    <span>Left-click &amp; drag to define group (or left-click to start defining a group polygon)</span>
  </footer>
</div>
</body>
</html>
```
FILE: styles.css
```css
* { box-sizing: border-box; }
body { margin: 0; font: 15px/20px "Noto Sans", "Liberation Sans", sans-serif; color: #3c3c3c; background: #2e2e2e; overflow: hidden; }
button, input, select { font: inherit; color: inherit; border: 0; background: none; padding: 0; margin: 0; }
svg { display: block; flex: none; }
.defs { position: absolute; }
.app { display: flex; flex-direction: column; height: 100vh; padding-bottom: 3px; }
.grow { flex: 1; }

.title { display: flex; align-items: center; height: 29px; flex: none; background: #000; color: #fff; }
.title h1 { margin: 0 0 0 8px; font-size: 14px; font-weight: 400; flex: 1; }
.win { display: flex; gap: 43px; padding: 0 12px 2px 0; }

.menu { display: flex; justify-content: flex-end; gap: 13px; height: 45px; flex: none; margin-right: -9px; background: #ccc; border-top: 2px solid #e0e0e0; border-bottom: 1px solid #b8b8b8; font-size: 16px; }

.toolbar { display: flex; justify-content: flex-end; height: 50px; flex: none; padding-top: 1px; margin-right: -3px; background: #d9d9d9; border-bottom: 2px solid #a2a2a2; }
.tool { position: relative; width: 44px; display: flex; align-items: center; justify-content: center; flex: none; }
.drop { position: absolute; left: 0; bottom: 5px; border-top: 6px solid #555; border-right: 6px solid transparent; }
.sep { width: 12px; flex: none; padding: 3px 5px 0; }
.sep::before { content: ""; display: block; width: 2px; height: 43px; background: #bdbdbd; }
.sep.double { width: 16px; padding-left: 2px; }
.sep.double::before { width: 7px; background: none; border: solid #bdbdbd; border-width: 0 2px; }
.wide { display: flex; align-items: center; gap: 7px; margin-right: 23px; }
.wide + .wide { gap: 3px; margin-right: 17px; }
.wide span { font: 700 11px/12px Roboto, "Noto Sans", sans-serif; text-align: left; }
.go { font: 700 11px "Noto Sans", sans-serif; fill: #dcdcdc; }
.tag { width: 26px; height: 26px; font-size: 11px; line-height: 26px; color: #fff; text-align: center; }
.ulp { background: #d28e3e; }
.scr { background: #2478b4; }
.schbrd { width: 26px; font-size: 11px; line-height: 13px; color: #fff; text-align: center; }
.schbrd b { display: block; background: #c02020; }
.schbrd b + b { background: #b8b8b8; }

.layerbar { display: flex; justify-content: flex-end; align-items: stretch; height: 52px; flex: none; background: #eee; border-bottom: 2px solid #dcdcdc; }
.layerbar .tool { width: 41px; }
.layerbar .tool.on { width: 40px; margin: 6px 0; background: #d5d5d5; border-radius: 2px; }
.layerbar .drop { bottom: 9px; }
.layerbar label { align-self: center; margin: 0 3px 0 23px; padding-top: 1px; }
.combo { position: relative; display: flex; align-items: center; background: #fff; border: 2px solid #909090; }
.combo::before { content: ""; position: absolute; left: 5px; border: 4px solid transparent; border-top: 7px solid #555; border-bottom: 0; }
.combo select { flex: 1; height: 100%; appearance: none; text-align-last: right; padding-right: 9px; outline: 0; }
.layer-combo { align-self: center; width: 163px; height: 33px; }
.swatch { width: 26px; height: 26px; margin-right: 9px; background: #a30c0c; }

.work { display: flex; flex: 1; min-height: 0; background: #eee; }
.tools { width: 77px; flex: none; overflow: hidden; border-right: 2px solid #d9d9d9; }
.grip { width: 65px; height: 7px; margin: 8px 0 5px; border: solid #cfcfcf; border-width: 2px 0; }
.pair { display: grid; grid-template-columns: 42px 42px; height: 42px; margin-left: -11px; }
.pair button { position: relative; display: flex; align-items: center; justify-content: center; }
.pair .on { margin: 2px; background: #d6d6d6; border-radius: 2px; }
.pair .drop { bottom: 2px; }
.tools hr { width: 73px; height: 1px; margin: 0; border: 0; background: #c9c9c9; }
.tools hr:first-of-type { margin-bottom: 1px; }
.pair .frac { flex-direction: column; font: 700 12px/13px "Liberation Sans", sans-serif; }
.frac span + span { border-top: 1px solid #777; }
.frac .dim { color: #b0b0b0; }
.expand { display: block; margin: 38px 0 0 24px; }

.panel { width: 448px; flex: none; display: flex; flex-direction: column; border-right: 4px solid #dadada; }
.tabs { display: flex; justify-content: flex-end; gap: 5px; height: 39px; padding-right: 2px; border-bottom: 1px solid #a8a8a8; font-size: 14px; }
.tabs button, .sub { padding: 0 11px 2px; color: #828282; background: #d8d8d8; border-bottom: 1px solid #eee; }
.tabs .active, .sub.active { padding-top: 1px; padding-bottom: 0; color: #0a94d8; background: none; border-bottom: 4px solid #0a94d8; }
.tabs .active { margin-bottom: -1px; }
.subtabs { display: flex; gap: 5px; height: 40px; padding: 1px 5px 0 4px; }
.square { width: 37px; height: 37px; background: #cfcfcf; border-radius: 2px; display: flex; align-items: center; justify-content: center; }
.sub { padding: 0 16px 2px; }
.view { display: flex; align-items: center; height: 60px; padding: 4px 40px 0 15px; border-bottom: 2px solid #dcdcdc; }
.hint { margin-right: 6px; }
.view .combo { flex: 1; height: 34px; border-color: #8c8c8c; }
.view label { font-weight: 700; }
.sections { flex: 1; display: flex; flex-direction: column; gap: 7px; padding: 2px 12px 1px 11px; min-height: 0; }
.block { flex: 1; display: flex; flex-direction: column; min-height: 0; }
.caption { display: flex; gap: 8px; height: 30px; align-items: center; }
.caption span:first-child { font-size: 16px; }
.caption i { flex: 1; height: 1px; background: #999; }
.search { display: flex; height: 34px; margin: 0 12px 8px 0; }
.search button + button { margin: 0 2px 0 6px; }
.search input { flex: 1; min-width: 0; padding-left: 55px; background: #fff; border: 2px solid #9a9a9a; border-left: 0; }
.search input::placeholder { color: #9b9b9b; opacity: 1; }
.box { flex: 1; min-height: 0; display: flex; flex-direction: column; justify-content: space-between; background: #fff; border: 2px solid #8c8c8c; overflow: hidden; }
table { width: 100%; border-collapse: collapse; }
.grid { table-layout: fixed; }
th { position: relative; height: 27px; padding: 0; font-weight: 400; line-height: 20px; }
td { height: 20px; padding: 0 5px; line-height: 20px; text-align: right; }
.grid th + th { border-left: 2px solid #e2e2e2; }
tbody tr:nth-child(even) { background: #f3f3f3; }
.sel { background: #0793d8; color: #fff; }
.sorted::before { content: ""; position: absolute; left: 50%; top: 2px; width: 7px; height: 7px; margin-left: -4px; border: solid #666; border-width: 1px 0 0 1px; transform: rotate(45deg); }
.c-pins { width: 28px; }
.c-side { width: 71px; }
.c-foot { width: 119px; }
.c-name { width: 52px; }
.c-first { width: 39px; }
.cut { text-align: left; }
.split { display: flex; flex: 1; }
.vtrack { width: 20px; margin-bottom: 19px; padding-left: 5px; background: #f3f3f3; }
.vtrack i { display: block; width: 8px; height: 38px; background: #808080; border-radius: 3px; }
.scrolled { flex: 1; display: flex; flex-direction: column; justify-content: space-between; }
.htrack { height: 20px; padding-top: 6px; background: #f1f1f1; }
.htrack i { display: block; height: 8px; margin-left: auto; background: #808080; border-radius: 3px; }
.w60 { width: 60%; }
.w41 { width: 41%; }

.editor { flex: 1; min-width: 0; display: flex; flex-direction: column; }
.command { display: flex; align-items: center; height: 43px; flex: none; padding: 0 0 1px 5px; }
.cmd { flex: 1; display: flex; align-items: center; height: 33px; background: #fff; border: 2px solid #2a9fdc; }
.arrow { width: 8px; height: 7px; margin-left: 5px; background: #555; clip-path: polygon(0 0, 100% 0, 50% 100%); }
.caret { width: 2px; height: 18px; margin-left: 13px; background: #222; }
.cmd input { flex: 1; min-width: 0; outline: 0; }
.command output { width: 161px; margin-left: 28px; white-space: nowrap; }
.stage { flex: 1; min-height: 0; display: grid; grid-template: minmax(0, 1fr) 20px / 21px minmax(0, 1fr); }
.vscroll { grid-row: span 2; padding-left: 6px; background: #f3f3f3; }
.vscroll i { display: block; width: 8px; height: 91%; background: #808080; border-radius: 3px; }
.canvas { position: relative; }
.board { width: 100%; height: 100%; }
.silk { font: 18px "Liberation Sans", sans-serif; fill: #c4c4c4; }
.silk .small { font-size: 15px; }
.hscroll { padding-top: 7px; background: #f3f3f3; }
.hscroll i { display: block; height: 8px; background: #808080; }
.side-tabs { position: absolute; top: 11px; right: 11px; display: flex; flex-direction: column; gap: 20px; }
.side-tabs button { width: 34px; height: 183px; padding-bottom: 4px; display: flex; align-items: center; justify-content: center; gap: 10px; writing-mode: vertical-rl; background: #3b3b3b; color: #fff; font-size: 14px; font-weight: 700; }
.side-tabs .mid { padding-bottom: 20px; }
.watermark { position: absolute; left: 200px; bottom: -51px; font: 700 56px/76px "DejaVu Sans", sans-serif; color: rgba(165, 165, 165, .35); }

.status { display: flex; align-items: center; height: 29px; flex: none; padding-left: 15px; background: #eee; border-top: 2px solid #9c9c9c; }
.status i { width: 2px; height: 27px; background: #d4d4d4; }
.status svg { margin: 0 2px 0 4px; }
.status span { margin-left: 8px; }
```
